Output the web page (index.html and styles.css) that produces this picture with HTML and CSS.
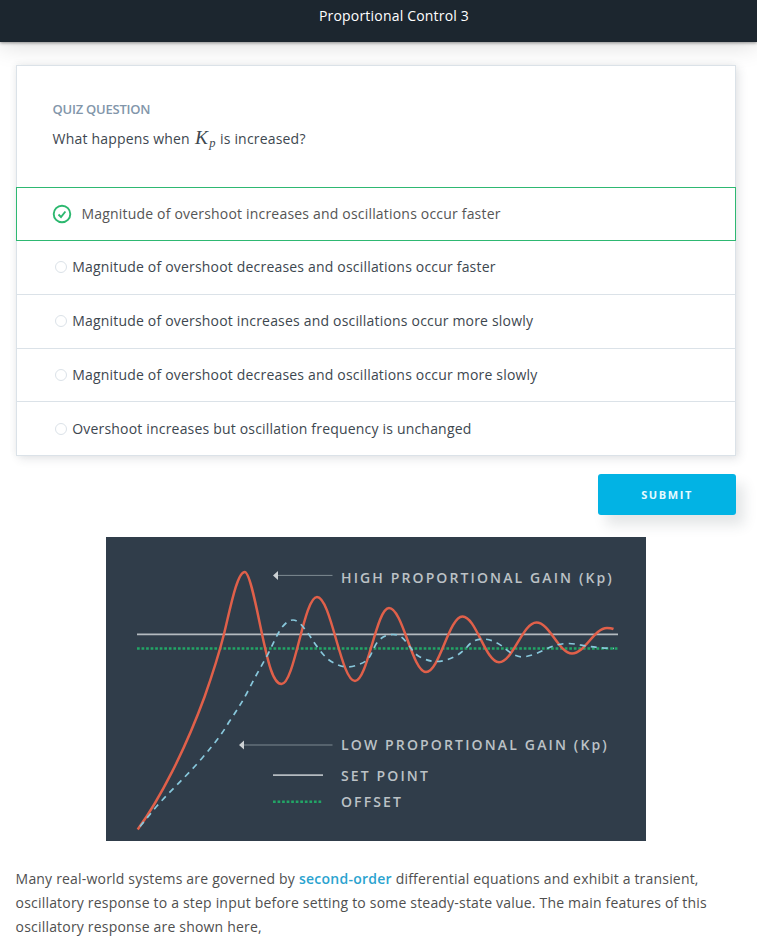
FILE: index.html
```html
<!DOCTYPE html>
<html lang="en">
<head>
<meta charset="utf-8">
<title>Proportional Control 3</title>
<link rel="stylesheet" href="styles.css">
</head>
<body>
<header class="topbar">Proportional Control 3</header>
<main class="content">
  <section class="quiz">
    <div class="question">
      <h2 class="label">QUIZ QUESTION</h2>
      <p class="prompt">What happens when <span class="math"><i class="var">K</i><i class="index">p</i></span> is increased?</p>
    </div>
    <div class="option selected">
      <svg class="check" viewBox="0 0 20 20"><circle cx="10" cy="10" r="8.3"/><path d="M6.5 10.5 9 13 13.4 7.5"/></svg>
      <span>Magnitude of overshoot increases and oscillations occur faster</span>
    </div>
    <div class="option"><span class="radio"></span><span>Magnitude of overshoot decreases and oscillations occur faster</span></div>
    <div class="option"><span class="radio"></span><span>Magnitude of overshoot increases and oscillations occur more slowly</span></div>
    <div class="option"><span class="radio"></span><span>Magnitude of overshoot decreases and oscillations occur more slowly</span></div>
    <div class="option"><span class="radio"></span><span>Overshoot increases but oscillation frequency is unchanged</span></div>
  </section>
  <button class="submit">SUBMIT</button>
  <svg class="chart" viewBox="0 0 540 304">
    <path class="setpoint" d="M31 97.4H512M167 238.2H217"/>
    <path class="offset" d="M31 111.5H512M167 264.7H217"/>
    <path class="high" d="M31.7 292.5C54 262 79 213 98.5 160C108 133 113 117 118 97C124 73 131 35 138.7 35C144 35 151 74 156 97C162 125 167 147 175.5 147C188.6 147 197.9 60 211 60C225 60 235 144 249 144C261.6 144 270.4 71 283 71C296.7 71 306.3 135 320 135C333.5 135 343 79.5 356.5 79.5C370 79.5 379.5 125.2 393 125.2C406.9 125.2 416.6 85.5 430.5 85.5C443.6 85.5 452.9 116.5 466 116.5C479 116.5 488 91 501 91Q505 91 507.5 92"/>
    <path class="low" d="M34 289.5L50 270C65 253 81 239 97 220C109 206 116 197 123 185C131 173 137 164 143 152C150 138 155 130 162 117C166 109 169 102 173 95C177 88 182 83 187 83C191 83 195 87 198 91C204 98 207 105 213 112C218 119 222 123 228 126C232 128 236 130 242 130C249 129.5 255 127 260 124C265 120 266 114 269 109C273 101 280 97.5 287 97.5C294 97.5 297 101 301 106C306 112 308 117 314 120C320 123 325 124.5 331 124.5C338 124.5 344 122 350 119C355 116 358 113 361 110C365 105 370 102 376 102C384 102 390 105 396 109C402 114 409 120 417 120C425 119 432 116 438 113C446 109 453 106.5 462 106.5C469 106.5 474 108 480 109C487 110 495 111 508 111.5"/>
    <path class="pointer" d="M171 38.4H226.5M137 208H226.5"/>
    <path class="arrow" d="M167 38.4L172 34V43ZM133 208L138 203.6V212.5Z"/>
    <g class="legend">
      <text x="235" y="46" textLength="271">HIGH PROPORTIONAL GAIN (Kp)</text>
      <text x="235" y="212.5" textLength="266">LOW PROPORTIONAL GAIN (Kp)</text>
      <text x="235" y="244" textLength="87">SET POINT</text>
      <text x="235" y="269.5" textLength="60">OFFSET</text>
    </g>
  </svg>
  <p class="copy">Many real-world systems are governed by <b>second-order</b> differential equations and exhibit a transient, oscillatory response to a step input before setting to some steady-state value. The main features of this oscillatory response are shown here,</p>
</main>
</body>
</html>
```
FILE: styles.css
```css
* { box-sizing: border-box; }
body {
  margin: 0;
  height: 941px;
  overflow: hidden;
  background: #fff;
  color: #4f4f4f;
  font: 14px/24px "Open Sans", sans-serif;
  letter-spacing: .19px;
}
.topbar {
  height: 42px;
  padding: 4px 0 0 31px;
  background: #1c262f;
  color: #fff;
  text-align: center;
  box-shadow: 0 1px 3px rgba(0,0,0,.4), 0 2px 26px rgba(0,0,0,.16);
}
.content {
  display: flex;
  flex-direction: column;
  padding: 23px 21px 0 15.6px;
}
.quiz {
  height: 391px;
  margin-left: .4px;
  border: 1px solid #dbe2e8;
  background: #fff;
  box-shadow: 3px 3px 9px rgba(46,61,73,.12), -1px -1px 7px rgba(46,61,73,.06);
}
.question {
  height: 121px;
  padding: 31px 36px 0 35.6px;
  color: #3d474f;
}
.label {
  margin: 0;
  color: #8296aa;
  font-size: 13px;
  line-height: 24px;
  font-weight: 600;
  letter-spacing: -.24px;
}
.prompt { margin: 6px 0 0; }
.math { font-family: "Liberation Serif", serif; margin: 0 .5px 0 1px; }
.var {
  display: inline-block;
  width: 14.5px;
  font-size: 18px;
  line-height: 1;
  transform: scaleX(1.08);
  transform-origin: left;
}
.index { font-size: 12.5px; line-height: 0; position: relative; top: 3px; }
.option {
  display: flex;
  align-items: center;
  height: 53.75px;
  padding-left: 38px;
  color: #3d474f;
  border-bottom: 1px solid #dbe2e8;
}
.option:last-child { border-bottom: 0; }
.option.selected {
  height: 54px;
  margin: 0 -1px;
  padding-left: 34.6px;
  border: 1px solid #2eb872;
  color: #555;
  gap: 9.9px;
}
.check {
  width: 20px;
  height: 20px;
  fill: none;
  stroke: #2cb86f;
  stroke-width: 1.9;
}
.radio {
  width: 12px;
  height: 12px;
  margin-right: 5.2px;
  border: 1px solid #dbe2e8;
  border-radius: 50%;
}
.submit {
  align-self: flex-end;
  width: 138px;
  height: 41px;
  margin-top: 18px;
  padding: 0;
  border: 0;
  border-radius: 3px;
  background: #02b3e4;
  color: #e6faff;
  font: 700 11px/41px "Open Sans", sans-serif;
  letter-spacing: 1.6px;
  box-shadow: 8px 10px 13px rgba(46,61,73,.13);
}
.chart {
  width: 540px;
  height: 304px;
  margin: 22px 0 0 90.4px;
  background: #303d4a;
  fill: none;
}
.setpoint { stroke: #b4bbc0; stroke-width: 1.8; }
.offset { stroke: #22a566; stroke-width: 2.4; stroke-dasharray: 2.7 1.85; }
.high { stroke: #e0604a; stroke-width: 2.5; }
.low { stroke: #88c8dc; stroke-width: 1.7; stroke-dasharray: 6 5.2; }
.pointer { stroke: #87939a; stroke-width: .9; }
.arrow { fill: #ccd1d4; }
.legend {
  fill: #bcc2c6;
  font-size: 14px;
  font-weight: 600;
}
.copy { margin: 26px 0 0; }
.copy b { color: #2ba3cf; font-weight: 600; letter-spacing: .26px; }
```
